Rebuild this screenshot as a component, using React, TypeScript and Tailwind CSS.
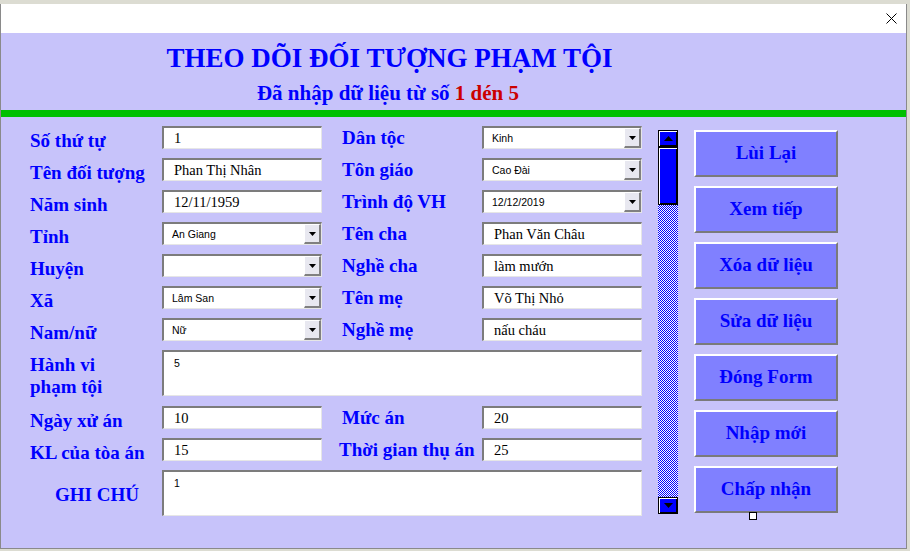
import React from "react";

const labelCls =
  "font-['Liberation_Serif',serif] font-bold text-[19px] text-[#0000ff] whitespace-nowrap";

function TextBox({ value, w = "w-[160px]" }: { value: string; w?: string }) {
  return (
    <div
      className={`${w} h-[23px] box-border bg-white border-t-2 border-l-2 border-r border-b border-t-[#7c7c7c] border-l-[#7c7c7c] border-r-[#e6e6e6] border-b-[#e6e6e6] pl-[10px] leading-[20px] text-[14.5px] text-black font-['Liberation_Serif',serif] whitespace-nowrap overflow-hidden`}
    >
      {value}
    </div>
  );
}

function Arrow({ down = true }: { down?: boolean }) {
  return (
    <svg width="7" height="4" viewBox="0 0 7 4" className="block">
      {down ? (
        <polygon points="0,0 7,0 3.5,4" fill="#000" />
      ) : (
        <polygon points="0,4 7,4 3.5,0" fill="#000" />
      )}
    </svg>
  );
}

function Select({ value }: { value: string }) {
  return (
    <div className="w-[160px] h-[23px] box-border bg-white border-t-2 border-l-2 border-r border-b border-t-[#7c7c7c] border-l-[#7c7c7c] border-r-[#e6e6e6] border-b-[#e6e6e6] flex">
      <div className="flex-1 pl-[8px] leading-[20px] text-[10.5px] text-black font-['Liberation_Sans',sans-serif] whitespace-nowrap overflow-hidden">
        {value}
      </div>
      <div className="w-[17px] h-[20px] box-border bg-[#e8e8f0] border-t border-l border-r-2 border-b-2 border-t-white border-l-white border-r-[#808080] border-b-[#808080] flex items-center justify-center">
        <Arrow />
      </div>
    </div>
  );
}

function TextArea({ value }: { value: string }) {
  return (
    <div className="w-[480px] h-[46px] box-border bg-white border-t-2 border-l-2 border-r border-b border-t-[#7c7c7c] border-l-[#7c7c7c] border-r-[#e6e6e6] border-b-[#e6e6e6] pl-[10px] pt-[4px] leading-[14px] text-[10.5px] text-black font-['Liberation_Sans',sans-serif]">
      {value}
    </div>
  );
}

function Row({
  l1,
  f1,
  l2,
  f2,
  l2Shift = "",
}: {
  l1: string;
  f1: React.ReactNode;
  l2: string;
  f2: React.ReactNode;
  l2Shift?: string;
}) {
  return (
    <div className="flex h-[23px]">
      <div className={`w-[132px] pt-[3px] leading-[23px] ${labelCls}`}>{l1}</div>
      {f1}
      <div className={`w-[160px] pl-[20px] leading-[23px] ${labelCls}`}>
        <span className={`block ${l2Shift}`}>{l2}</span>
      </div>
      {f2}
    </div>
  );
}

function ScrollBtn({ down = false }: { down?: boolean }) {
  return (
    <div className="h-[17px] box-border bg-[#0000ff] border border-black shadow-[inset_1px_1px_0_#ffffff,inset_-1px_-1px_0_#000000] flex items-center justify-center">
      <svg width="9" height="5" viewBox="0 0 9 5" className="block">
        {down ? (
          <polygon points="0,0 9,0 4.5,5" fill="#000" />
        ) : (
          <polygon points="0,5 9,5 4.5,0" fill="#000" />
        )}
      </svg>
    </div>
  );
}

function Btn({ label, handle = false }: { label: string; handle?: boolean }) {
  return (
    <div className="relative h-[47px] box-border bg-[#8080ff] border-2 border-t-white border-l-white border-r-[#7a7a7a] border-b-[#7a7a7a] flex items-center justify-center font-['Liberation_Serif',serif] font-bold text-[19px] text-[#0000ff] whitespace-nowrap">
      {label}
      {handle && (
        <div className="absolute left-[53px] top-[44px] w-[8px] h-[8px] box-border border border-black bg-white" />
      )}
    </div>
  );
}

export default function App() {
  return (
    <div className="w-[910px] h-[551px] bg-[#dcdcd2] pt-[4px] overflow-hidden">
      <div className="w-[907px] h-[545px] box-border border-l border-r border-b border-[#8a8a8a] flex flex-col">
        {/* title bar */}
        <div className="h-[29px] bg-white flex items-center justify-end pr-[9px]">
          <svg width="11" height="11" viewBox="0 0 11 11" className="block">
            <line x1="0.5" y1="0.5" x2="10.5" y2="10.5" stroke="#000" strokeWidth="1" />
            <line x1="10.5" y1="0.5" x2="0.5" y2="10.5" stroke="#000" strokeWidth="1" />
          </svg>
        </div>

        {/* client */}
        <div className="flex-1 bg-[#c7c3fa] flex flex-col">
          <div className="w-[777px] mt-[10px] text-center leading-[30px] text-[27px] font-bold text-[#0000ff] font-['Liberation_Serif',serif] whitespace-nowrap">
            THEO DÕI ĐỐI TƯỢNG PHẠM TỘI
          </div>
          <div className="w-[774px] mt-[8px] text-center leading-[24px] text-[21px] font-bold text-[#0000ff] font-['Liberation_Serif',serif] whitespace-nowrap">
            Đã nhập dữ liệu từ số <span className="text-[#cc0000]">1 dén 5</span>
          </div>
          <div className="mt-[5px] h-[7px] bg-[#00c000]" />

          <div className="flex pt-[9px] pl-[29px]">
            {/* form */}
            <div className="w-[612px] flex flex-col gap-[9px]">
              <Row l1="Số thứ tự" f1={<TextBox value="1" />} l2="Dân tộc" f2={<Select value="Kinh" />} />
              <Row
                l1="Tên đối tượng"
                f1={<TextBox value="Phan Thị Nhân" />}
                l2="Tôn giáo"
                f2={<Select value="Cao Đài" />}
              />
              <Row
                l1="Năm sinh"
                f1={<TextBox value="12/11/1959" />}
                l2="Trình độ VH"
                f2={<Select value="12/12/2019" />}
              />
              <Row l1="Tỉnh" f1={<Select value="An Giang" />} l2="Tên cha" f2={<TextBox value="Phan Văn Châu" />} />
              <Row l1="Huyện" f1={<Select value="" />} l2="Nghề cha" f2={<TextBox value="làm mướn" />} />
              <Row l1="Xã" f1={<Select value="Lâm San" />} l2="Tên mẹ" f2={<TextBox value="Võ Thị Nhỏ" />} />
              <Row l1="Nam/nữ" f1={<Select value="Nữ" />} l2="Nghề mẹ" f2={<TextBox value="nấu cháu" />} />

              <div className="flex h-[46px]">
                <div className={`w-[132px] pt-[4px] leading-[22px] ${labelCls}`}>
                  Hành vi
                  <br />
                  phạm tội
                </div>
                <TextArea value="5" />
              </div>

              <div className="mt-px">
                <Row l1="Ngày xử án" f1={<TextBox value="10" />} l2="Mức án" f2={<TextBox value="20" />} />
              </div>
              <Row
                l1="KL của tòa án"
                f1={<TextBox value="15" />}
                l2="Thời gian thụ án"
                f2={<TextBox value="25" />}
                l2Shift="-ml-[3px]"
              />

              <div className="flex h-[46px]">
                <div className={`w-[132px] pl-[25px] pt-[2px] leading-[46px] text-[18.5px] ${labelCls}`}>
                  GHI CHÚ
                </div>
                <TextArea value="1" />
              </div>
            </div>

            {/* scrollbar */}
            <div className="ml-[16px] mt-[4px] w-[20px] h-[384px] flex flex-col">
              <ScrollBtn />
              <div className="h-[58px] box-border bg-[#0000ff] border border-black shadow-[inset_1px_1px_0_#ffffff,inset_-1px_-1px_0_#000000]" />
              <div className="flex-1 bg-[conic-gradient(#0000ff_25%,#ffffff_0_50%,#0000ff_0_75%,#ffffff_0)] bg-[length:2px_2px]" />
              <ScrollBtn down />
            </div>

            {/* buttons */}
            <div className="ml-[16px] mt-[4px] w-[144px] flex flex-col gap-[9px]">
              <Btn label="Lùi Lại" />
              <Btn label="Xem tiếp" />
              <Btn label="Xóa dữ liệu" />
              <Btn label="Sửa dữ liệu" />
              <Btn label="Đóng Form" />
              <Btn label="Nhập mới" />
              <Btn label="Chấp nhận" handle />
            </div>
          </div>
        </div>
      </div>
    </div>
  );
}
